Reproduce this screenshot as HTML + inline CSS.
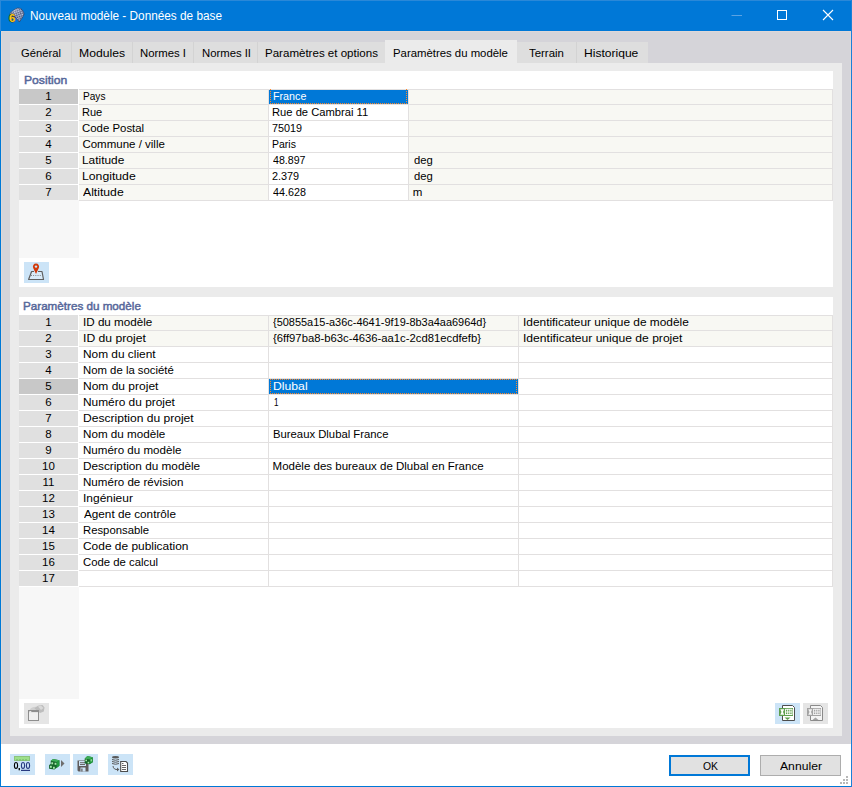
<!DOCTYPE html>
<html><head><meta charset="utf-8"><title>Nouveau modèle</title><style>
*{margin:0;padding:0;box-sizing:border-box}
html,body{width:852px;height:787px;overflow:hidden}
body{position:relative;background:#0078d7;font-family:"Liberation Sans",sans-serif;font-size:11.5px;color:#000}
.a{position:absolute}
.t{position:absolute;white-space:pre;line-height:15px;height:15px;transform-origin:0 0}
</style></head><body>
<div class="a" style="left:1px;top:31px;width:850px;height:713px;background:#d5d4d9;"></div>
<div class="a" style="left:1px;top:744px;width:850px;height:42px;background:#ffffff;"></div>
<div class="a" style="left:1px;top:31px;width:850px;height:1px;background:#ded8d8;"></div>
<div class="a" style="left:1px;top:31px;width:1px;height:713px;background:#ded8d8;"></div>
<div class="a" style="left:850px;top:31px;width:1px;height:713px;background:#ded8d8;"></div>
<div class="a" style="left:0px;top:0px;width:1px;height:31px;background:#2a88d8;"></div>
<div class="a" style="left:0px;top:0px;width:852px;height:1px;background:#2a88d8;"></div>
<div class="a" style="left:851px;top:0px;width:1px;height:787px;background:#1a80d8;"></div>
<div class="t" style="left:29.52px;top:9px;transform:scaleX(0.9820);color:#fff;font-size:12px">Nouveau modèle - Données de base</div>
<div class="a" style="left:10px;top:42px;width:638px;height:21px;background:#dedede;"></div>
<div class="t" style="left:21.03px;top:46px;transform:scaleX(0.9744);">Général</div>
<div class="a" style="left:71px;top:42px;width:1px;height:21px;background:#d3d3d3;"></div>
<div class="t" style="left:79.44px;top:46px;transform:scaleX(1.0595);">Modules</div>
<div class="a" style="left:132px;top:42px;width:1px;height:21px;background:#d3d3d3;"></div>
<div class="t" style="left:140.31px;top:46px;transform:scaleX(0.9867);">Normes I</div>
<div class="a" style="left:193px;top:42px;width:1px;height:21px;background:#d3d3d3;"></div>
<div class="t" style="left:201.52px;top:46px;transform:scaleX(0.9833);">Normes II</div>
<div class="a" style="left:257px;top:42px;width:1px;height:21px;background:#d3d3d3;"></div>
<div class="t" style="left:265.40px;top:46px;transform:scaleX(1.0036);">Paramètres et options</div>
<div class="a" style="left:385px;top:40px;width:132px;height:23px;background:#ebebeb;"></div>
<div class="t" style="left:393.41px;top:46px;transform:scaleX(0.9878);">Paramètres du modèle</div>
<div class="t" style="left:529.00px;top:46px;transform:scaleX(0.9914);">Terrain</div>
<div class="a" style="left:576px;top:42px;width:1px;height:21px;background:#d3d3d3;"></div>
<div class="t" style="left:584.35px;top:46px;transform:scaleX(1.0490);">Historique</div>
<div class="a" style="left:10px;top:63px;width:832px;height:673px;background:#ebebeb;"></div>
<div class="a" style="left:19px;top:71px;width:814px;height:216px;background:#ffffff;"></div>
<div class="t" style="left:23.69px;top:73px;transform:scaleX(1.1053);color:#56679a;font-size:11px;-webkit-text-stroke:0.45px #56679a">Position</div>
<div class="a" style="left:19px;top:89px;width:59px;height:15px;background:#c8c8c8;"></div>
<div class="a" style="left:19px;top:105px;width:59px;height:15px;background:#e0e0e0;"></div>
<div class="a" style="left:19px;top:121px;width:59px;height:15px;background:#e0e0e0;"></div>
<div class="a" style="left:19px;top:137px;width:59px;height:15px;background:#e0e0e0;"></div>
<div class="a" style="left:19px;top:153px;width:59px;height:15px;background:#e0e0e0;"></div>
<div class="a" style="left:19px;top:169px;width:59px;height:15px;background:#e0e0e0;"></div>
<div class="a" style="left:19px;top:185px;width:59px;height:15px;background:#e0e0e0;"></div>
<div class="a" style="left:79px;top:90px;width:189px;height:14px;background:#f8f8f3;"></div>
<div class="a" style="left:269px;top:90px;width:139px;height:14px;background:#ffffff;"></div>
<div class="a" style="left:409px;top:90px;width:423px;height:14px;background:#f8f8f3;"></div>
<div class="a" style="left:79px;top:105px;width:189px;height:15px;background:#f8f8f3;"></div>
<div class="a" style="left:269px;top:105px;width:139px;height:15px;background:#ffffff;"></div>
<div class="a" style="left:409px;top:105px;width:423px;height:15px;background:#f8f8f3;"></div>
<div class="a" style="left:79px;top:121px;width:189px;height:15px;background:#f8f8f3;"></div>
<div class="a" style="left:269px;top:121px;width:139px;height:15px;background:#ffffff;"></div>
<div class="a" style="left:409px;top:121px;width:423px;height:15px;background:#f8f8f3;"></div>
<div class="a" style="left:79px;top:137px;width:189px;height:15px;background:#f8f8f3;"></div>
<div class="a" style="left:269px;top:137px;width:139px;height:15px;background:#ffffff;"></div>
<div class="a" style="left:409px;top:137px;width:423px;height:15px;background:#f8f8f3;"></div>
<div class="a" style="left:79px;top:153px;width:189px;height:15px;background:#f8f8f3;"></div>
<div class="a" style="left:269px;top:153px;width:139px;height:15px;background:#ffffff;"></div>
<div class="a" style="left:409px;top:153px;width:423px;height:15px;background:#f8f8f3;"></div>
<div class="a" style="left:79px;top:169px;width:189px;height:15px;background:#f8f8f3;"></div>
<div class="a" style="left:269px;top:169px;width:139px;height:15px;background:#ffffff;"></div>
<div class="a" style="left:409px;top:169px;width:423px;height:15px;background:#f8f8f3;"></div>
<div class="a" style="left:79px;top:185px;width:189px;height:15px;background:#f8f8f3;"></div>
<div class="a" style="left:269px;top:185px;width:139px;height:15px;background:#ffffff;"></div>
<div class="a" style="left:409px;top:185px;width:423px;height:15px;background:#f8f8f3;"></div>
<div class="a" style="left:79px;top:89px;width:754px;height:1px;background:#e2e0e0;"></div>
<div class="a" style="left:79px;top:104px;width:754px;height:1px;background:#e2e0e0;"></div>
<div class="a" style="left:79px;top:120px;width:754px;height:1px;background:#e2e0e0;"></div>
<div class="a" style="left:79px;top:136px;width:754px;height:1px;background:#e2e0e0;"></div>
<div class="a" style="left:79px;top:152px;width:754px;height:1px;background:#e2e0e0;"></div>
<div class="a" style="left:79px;top:168px;width:754px;height:1px;background:#e2e0e0;"></div>
<div class="a" style="left:79px;top:184px;width:754px;height:1px;background:#e2e0e0;"></div>
<div class="a" style="left:79px;top:200px;width:754px;height:1px;background:#e2e0e0;"></div>
<div class="a" style="left:268px;top:89px;width:1px;height:112px;background:#e2e0e0;"></div>
<div class="a" style="left:408px;top:89px;width:1px;height:112px;background:#e2e0e0;"></div>
<div class="a" style="left:832px;top:89px;width:1px;height:112px;background:#e2e0e0;"></div>
<div class="a" style="left:269px;top:90px;width:139px;height:14px;background:#0078d7;"></div>
<div class="a" style="left:270px;top:103px;width:137px;height:1px;background:repeating-linear-gradient(90deg,#ff8728 0 1px,transparent 1px 2px);"></div>
<div class="a" style="left:270px;top:89px;width:1px;height:15px;background:repeating-linear-gradient(180deg,#ff8728 0 1px,transparent 1px 2px);"></div>
<div class="a" style="left:406px;top:89px;width:1px;height:15px;background:repeating-linear-gradient(180deg,#ff8728 0 1px,transparent 1px 2px);"></div>
<div class="t" style="left:19px;top:89px;width:59px;text-align:center">1</div>
<div class="t" style="left:19px;top:105px;width:59px;text-align:center">2</div>
<div class="t" style="left:19px;top:121px;width:59px;text-align:center">3</div>
<div class="t" style="left:19px;top:137px;width:59px;text-align:center">4</div>
<div class="t" style="left:19px;top:153px;width:59px;text-align:center">5</div>
<div class="t" style="left:19px;top:169px;width:59px;text-align:center">6</div>
<div class="t" style="left:19px;top:185px;width:59px;text-align:center">7</div>
<div class="t" style="left:82.52px;top:89px;transform:scaleX(0.8792);">Pays</div>
<div class="t" style="left:82.44px;top:105px;transform:scaleX(0.9600);">Rue</div>
<div class="t" style="left:82.41px;top:121px;transform:scaleX(0.9918);">Code Postal</div>
<div class="t" style="left:82.40px;top:137px;">Commune / ville</div>
<div class="t" style="left:82.37px;top:153px;transform:scaleX(1.0325);">Latitude</div>
<div class="t" style="left:82.34px;top:169px;transform:scaleX(1.0633);">Longitude</div>
<div class="t" style="left:83.40px;top:185px;transform:scaleX(1.0605);">Altitude</div>
<div class="t" style="left:272.97px;top:89px;transform:scaleX(0.9314);color:#fff">France</div>
<div class="t" style="left:272.33px;top:105px;transform:scaleX(0.9732);">Rue de Cambrai 11</div>
<div class="t" style="left:272.36px;top:121px;transform:scaleX(0.9387);">75019</div>
<div class="t" style="left:272.39px;top:137px;transform:scaleX(0.9120);">Paris</div>
<div class="t" style="left:273.30px;top:153px;transform:scaleX(0.9229);">48.897</div>
<div class="t" style="left:272.36px;top:169px;transform:scaleX(0.9429);">2.379</div>
<div class="t" style="left:273.30px;top:185px;transform:scaleX(0.9343);">44.628</div>
<div class="t" style="left:413.80px;top:153px;transform:scaleX(0.9789);">deg</div>
<div class="t" style="left:413.80px;top:169px;transform:scaleX(0.9789);">deg</div>
<div class="t" style="left:412.80px;top:185px;">m</div>
<div class="a" style="left:19px;top:200px;width:60px;height:58px;background:#f7f7f7;"></div>
<div class="a" style="left:24px;top:262px;width:25px;height:21px;background:#cce4f7;"></div>
<div class="a" style="left:19px;top:297px;width:814px;height:431px;background:#ffffff;"></div>
<div class="t" style="left:23.44px;top:299px;transform:scaleX(1.0591);color:#56679a;font-size:11px;-webkit-text-stroke:0.45px #56679a">Paramètres du modèle</div>
<div class="a" style="left:19px;top:315px;width:59px;height:15px;background:#e0e0e0;"></div>
<div class="a" style="left:19px;top:331px;width:59px;height:15px;background:#e0e0e0;"></div>
<div class="a" style="left:19px;top:347px;width:59px;height:15px;background:#e0e0e0;"></div>
<div class="a" style="left:19px;top:363px;width:59px;height:15px;background:#e0e0e0;"></div>
<div class="a" style="left:19px;top:379px;width:59px;height:15px;background:#c8c8c8;"></div>
<div class="a" style="left:19px;top:395px;width:59px;height:15px;background:#e0e0e0;"></div>
<div class="a" style="left:19px;top:411px;width:59px;height:15px;background:#e0e0e0;"></div>
<div class="a" style="left:19px;top:427px;width:59px;height:15px;background:#e0e0e0;"></div>
<div class="a" style="left:19px;top:443px;width:59px;height:15px;background:#e0e0e0;"></div>
<div class="a" style="left:19px;top:459px;width:59px;height:15px;background:#e0e0e0;"></div>
<div class="a" style="left:19px;top:475px;width:59px;height:15px;background:#e0e0e0;"></div>
<div class="a" style="left:19px;top:491px;width:59px;height:15px;background:#e0e0e0;"></div>
<div class="a" style="left:19px;top:507px;width:59px;height:15px;background:#e0e0e0;"></div>
<div class="a" style="left:19px;top:523px;width:59px;height:15px;background:#e0e0e0;"></div>
<div class="a" style="left:19px;top:539px;width:59px;height:15px;background:#e0e0e0;"></div>
<div class="a" style="left:19px;top:555px;width:59px;height:15px;background:#e0e0e0;"></div>
<div class="a" style="left:19px;top:571px;width:59px;height:15px;background:#e0e0e0;"></div>
<div class="a" style="left:79px;top:316px;width:189px;height:14px;background:#f8f8f3;"></div>
<div class="a" style="left:269px;top:316px;width:249px;height:14px;background:#f8f8f3;"></div>
<div class="a" style="left:519px;top:316px;width:313px;height:14px;background:#f8f8f3;"></div>
<div class="a" style="left:79px;top:331px;width:189px;height:15px;background:#f8f8f3;"></div>
<div class="a" style="left:269px;top:331px;width:249px;height:15px;background:#f8f8f3;"></div>
<div class="a" style="left:519px;top:331px;width:313px;height:15px;background:#f8f8f3;"></div>
<div class="a" style="left:79px;top:347px;width:189px;height:15px;background:#ffffff;"></div>
<div class="a" style="left:269px;top:347px;width:249px;height:15px;background:#ffffff;"></div>
<div class="a" style="left:519px;top:347px;width:313px;height:15px;background:#ffffff;"></div>
<div class="a" style="left:79px;top:363px;width:189px;height:15px;background:#ffffff;"></div>
<div class="a" style="left:269px;top:363px;width:249px;height:15px;background:#ffffff;"></div>
<div class="a" style="left:519px;top:363px;width:313px;height:15px;background:#ffffff;"></div>
<div class="a" style="left:79px;top:379px;width:189px;height:15px;background:#ffffff;"></div>
<div class="a" style="left:269px;top:379px;width:249px;height:15px;background:#ffffff;"></div>
<div class="a" style="left:519px;top:379px;width:313px;height:15px;background:#ffffff;"></div>
<div class="a" style="left:79px;top:395px;width:189px;height:15px;background:#ffffff;"></div>
<div class="a" style="left:269px;top:395px;width:249px;height:15px;background:#ffffff;"></div>
<div class="a" style="left:519px;top:395px;width:313px;height:15px;background:#ffffff;"></div>
<div class="a" style="left:79px;top:411px;width:189px;height:15px;background:#ffffff;"></div>
<div class="a" style="left:269px;top:411px;width:249px;height:15px;background:#ffffff;"></div>
<div class="a" style="left:519px;top:411px;width:313px;height:15px;background:#ffffff;"></div>
<div class="a" style="left:79px;top:427px;width:189px;height:15px;background:#ffffff;"></div>
<div class="a" style="left:269px;top:427px;width:249px;height:15px;background:#ffffff;"></div>
<div class="a" style="left:519px;top:427px;width:313px;height:15px;background:#ffffff;"></div>
<div class="a" style="left:79px;top:443px;width:189px;height:15px;background:#ffffff;"></div>
<div class="a" style="left:269px;top:443px;width:249px;height:15px;background:#ffffff;"></div>
<div class="a" style="left:519px;top:443px;width:313px;height:15px;background:#ffffff;"></div>
<div class="a" style="left:79px;top:459px;width:189px;height:15px;background:#ffffff;"></div>
<div class="a" style="left:269px;top:459px;width:249px;height:15px;background:#ffffff;"></div>
<div class="a" style="left:519px;top:459px;width:313px;height:15px;background:#ffffff;"></div>
<div class="a" style="left:79px;top:475px;width:189px;height:15px;background:#ffffff;"></div>
<div class="a" style="left:269px;top:475px;width:249px;height:15px;background:#ffffff;"></div>
<div class="a" style="left:519px;top:475px;width:313px;height:15px;background:#ffffff;"></div>
<div class="a" style="left:79px;top:491px;width:189px;height:15px;background:#ffffff;"></div>
<div class="a" style="left:269px;top:491px;width:249px;height:15px;background:#ffffff;"></div>
<div class="a" style="left:519px;top:491px;width:313px;height:15px;background:#ffffff;"></div>
<div class="a" style="left:79px;top:507px;width:189px;height:15px;background:#ffffff;"></div>
<div class="a" style="left:269px;top:507px;width:249px;height:15px;background:#ffffff;"></div>
<div class="a" style="left:519px;top:507px;width:313px;height:15px;background:#ffffff;"></div>
<div class="a" style="left:79px;top:523px;width:189px;height:15px;background:#ffffff;"></div>
<div class="a" style="left:269px;top:523px;width:249px;height:15px;background:#ffffff;"></div>
<div class="a" style="left:519px;top:523px;width:313px;height:15px;background:#ffffff;"></div>
<div class="a" style="left:79px;top:539px;width:189px;height:15px;background:#ffffff;"></div>
<div class="a" style="left:269px;top:539px;width:249px;height:15px;background:#ffffff;"></div>
<div class="a" style="left:519px;top:539px;width:313px;height:15px;background:#ffffff;"></div>
<div class="a" style="left:79px;top:555px;width:189px;height:15px;background:#ffffff;"></div>
<div class="a" style="left:269px;top:555px;width:249px;height:15px;background:#ffffff;"></div>
<div class="a" style="left:519px;top:555px;width:313px;height:15px;background:#ffffff;"></div>
<div class="a" style="left:79px;top:571px;width:189px;height:15px;background:#ffffff;"></div>
<div class="a" style="left:269px;top:571px;width:249px;height:15px;background:#ffffff;"></div>
<div class="a" style="left:519px;top:571px;width:313px;height:15px;background:#ffffff;"></div>
<div class="a" style="left:79px;top:315px;width:754px;height:1px;background:#e2e0e0;"></div>
<div class="a" style="left:79px;top:330px;width:754px;height:1px;background:#e2e0e0;"></div>
<div class="a" style="left:79px;top:346px;width:754px;height:1px;background:#e2e0e0;"></div>
<div class="a" style="left:79px;top:362px;width:754px;height:1px;background:#e2e0e0;"></div>
<div class="a" style="left:79px;top:378px;width:754px;height:1px;background:#e2e0e0;"></div>
<div class="a" style="left:79px;top:394px;width:754px;height:1px;background:#e2e0e0;"></div>
<div class="a" style="left:79px;top:410px;width:754px;height:1px;background:#e2e0e0;"></div>
<div class="a" style="left:79px;top:426px;width:754px;height:1px;background:#e2e0e0;"></div>
<div class="a" style="left:79px;top:442px;width:754px;height:1px;background:#e2e0e0;"></div>
<div class="a" style="left:79px;top:458px;width:754px;height:1px;background:#e2e0e0;"></div>
<div class="a" style="left:79px;top:474px;width:754px;height:1px;background:#e2e0e0;"></div>
<div class="a" style="left:79px;top:490px;width:754px;height:1px;background:#e2e0e0;"></div>
<div class="a" style="left:79px;top:506px;width:754px;height:1px;background:#e2e0e0;"></div>
<div class="a" style="left:79px;top:522px;width:754px;height:1px;background:#e2e0e0;"></div>
<div class="a" style="left:79px;top:538px;width:754px;height:1px;background:#e2e0e0;"></div>
<div class="a" style="left:79px;top:554px;width:754px;height:1px;background:#e2e0e0;"></div>
<div class="a" style="left:79px;top:570px;width:754px;height:1px;background:#e2e0e0;"></div>
<div class="a" style="left:79px;top:586px;width:754px;height:1px;background:#e2e0e0;"></div>
<div class="a" style="left:268px;top:315px;width:1px;height:272px;background:#e2e0e0;"></div>
<div class="a" style="left:518px;top:315px;width:1px;height:272px;background:#e2e0e0;"></div>
<div class="a" style="left:832px;top:315px;width:1px;height:272px;background:#e2e0e0;"></div>
<div class="a" style="left:269px;top:379px;width:249px;height:15px;background:#0078d7;"></div>
<div class="a" style="left:270px;top:379px;width:247px;height:1px;background:repeating-linear-gradient(90deg,#ff8728 0 1px,transparent 1px 2px);"></div>
<div class="a" style="left:270px;top:393px;width:247px;height:1px;background:repeating-linear-gradient(90deg,#ff8728 0 1px,transparent 1px 2px);"></div>
<div class="a" style="left:270px;top:379px;width:1px;height:15px;background:repeating-linear-gradient(180deg,#ff8728 0 1px,transparent 1px 2px);"></div>
<div class="a" style="left:516px;top:379px;width:1px;height:15px;background:repeating-linear-gradient(180deg,#ff8728 0 1px,transparent 1px 2px);"></div>
<div class="t" style="left:19px;top:315px;width:59px;text-align:center">1</div>
<div class="t" style="left:19px;top:331px;width:59px;text-align:center">2</div>
<div class="t" style="left:19px;top:347px;width:59px;text-align:center">3</div>
<div class="t" style="left:19px;top:363px;width:59px;text-align:center">4</div>
<div class="t" style="left:19px;top:379px;width:59px;text-align:center">5</div>
<div class="t" style="left:19px;top:395px;width:59px;text-align:center">6</div>
<div class="t" style="left:19px;top:411px;width:59px;text-align:center">7</div>
<div class="t" style="left:19px;top:427px;width:59px;text-align:center">8</div>
<div class="t" style="left:19px;top:443px;width:59px;text-align:center">9</div>
<div class="t" style="left:19px;top:459px;width:59px;text-align:center">10</div>
<div class="t" style="left:19px;top:475px;width:59px;text-align:center">11</div>
<div class="t" style="left:19px;top:491px;width:59px;text-align:center">12</div>
<div class="t" style="left:19px;top:507px;width:59px;text-align:center">13</div>
<div class="t" style="left:19px;top:523px;width:59px;text-align:center">14</div>
<div class="t" style="left:19px;top:539px;width:59px;text-align:center">15</div>
<div class="t" style="left:19px;top:555px;width:59px;text-align:center">16</div>
<div class="t" style="left:19px;top:571px;width:59px;text-align:center">17</div>
<div class="t" style="left:82.59px;top:315px;transform:scaleX(1.0134);">ID du modèle</div>
<div class="t" style="left:82.54px;top:331px;transform:scaleX(1.0569);">ID du projet</div>
<div class="t" style="left:82.57px;top:347px;transform:scaleX(1.0319);">Nom du client</div>
<div class="t" style="left:82.61px;top:363px;transform:scaleX(0.9868);">Nom de la société</div>
<div class="t" style="left:82.56px;top:379px;transform:scaleX(1.0437);">Nom du projet</div>
<div class="t" style="left:82.57px;top:395px;transform:scaleX(1.0341);">Numéro du projet</div>
<div class="t" style="left:82.55px;top:411px;transform:scaleX(1.0490);">Description du projet</div>
<div class="t" style="left:82.59px;top:427px;transform:scaleX(1.0137);">Nom du modèle</div>
<div class="t" style="left:82.59px;top:443px;transform:scaleX(1.0062);">Numéro du modèle</div>
<div class="t" style="left:82.58px;top:459px;transform:scaleX(1.0239);">Description du modèle</div>
<div class="t" style="left:82.59px;top:475px;transform:scaleX(1.0071);">Numéro de révision</div>
<div class="t" style="left:82.56px;top:491px;transform:scaleX(1.0404);">Ingénieur</div>
<div class="t" style="left:83.60px;top:507px;transform:scaleX(1.0200);">Agent de contrôle</div>
<div class="t" style="left:82.62px;top:523px;transform:scaleX(0.9833);">Responsable</div>
<div class="t" style="left:82.56px;top:539px;transform:scaleX(1.0370);">Code de publication</div>
<div class="t" style="left:82.61px;top:555px;transform:scaleX(0.9867);">Code de calcul</div>
<div class="t" style="left:272.70px;top:315px;transform:scaleX(0.9522);">{50855a15-a36c-4641-9f19-8b3a4aa6964d}</div>
<div class="t" style="left:272.70px;top:331px;transform:scaleX(0.9807);">{6ff97ba8-b63c-4636-aa1c-2cd81ecdfefb}</div>
<div class="t" style="left:272.74px;top:379px;transform:scaleX(1.0613);color:#fff">Dlubal</div>
<div class="t" style="left:273.90px;top:395px;transform:scaleX(0.7000);">1</div>
<div class="t" style="left:272.62px;top:427px;transform:scaleX(0.9819);">Bureaux Dlubal France</div>
<div class="t" style="left:272.60px;top:459px;">Modèle des bureaux de Dlubal en France</div>
<div class="t" style="left:523.17px;top:315px;transform:scaleX(1.0333);">Identificateur unique de modèle</div>
<div class="t" style="left:523.15px;top:331px;transform:scaleX(1.0520);">Identificateur unique de projet</div>
<div class="a" style="left:19px;top:587px;width:60px;height:112px;background:#f7f7f7;"></div>
<div class="a" style="left:24px;top:703px;width:25px;height:21px;background:#e5e5e5;"></div>
<div class="a" style="left:775px;top:703px;width:25px;height:21px;background:#cce4f7;"></div>
<div class="a" style="left:803px;top:703px;width:25px;height:21px;background:#e5e5e5;"></div>
<div class="a" style="left:10px;top:754px;width:25px;height:21px;background:#cce4f7;"></div>
<div class="a" style="left:45px;top:754px;width:25px;height:21px;background:#cce4f7;"></div>
<div class="a" style="left:73px;top:754px;width:25px;height:21px;background:#cce4f7;"></div>
<div class="a" style="left:108px;top:754px;width:25px;height:21px;background:#cce4f7;"></div>
<div class="a" style="left:669px;top:755px;width:81px;height:21px;background:#e1e1e1;border:2px solid #0078d7;"></div>
<div class="t" style="left:702.50px;top:759px;transform:scaleX(0.9062);">OK</div>
<div class="a" style="left:760px;top:755px;width:81px;height:21px;background:#e1e1e1;border:1px solid #adadad;"></div>
<div class="t" style="left:780.00px;top:759px;transform:scaleX(1.0590);">Annuler</div>
<svg class="a" style="left:0;top:0;pointer-events:none" width="852" height="787" viewBox="0 0 852 787">
<defs>
<pattern id="ck" width="3" height="3" patternUnits="userSpaceOnUse" patternTransform="rotate(25)">
<rect width="3" height="3" fill="#c6d2ee"/><rect width="1.5" height="1.5" fill="#34406a"/><rect x="1.5" y="1.5" width="1.5" height="1.5" fill="#34406a"/>
</pattern>
</defs>
<!-- title icon -->
<linearGradient id="shd" x1="0" y1="0" x2="1" y2="1"><stop offset="0" stop-color="#fff" stop-opacity="0.45"/><stop offset="0.55" stop-color="#fff" stop-opacity="0"/><stop offset="1" stop-color="#000" stop-opacity="0.35"/></linearGradient>
<path d="M9.8,13.4 C12,11.2 15,8.8 17.8,8 L20.8,8.6 C22.6,10 23.8,12 24,14.2 C22.8,17.2 21,19.6 19.4,22 C17.2,18.8 13.8,15.2 9.8,13.4 Z" fill="url(#ck)" stroke="#2a3358" stroke-width="0.6"/>
<path d="M9.8,13.4 C12,11.2 15,8.8 17.8,8 L20.8,8.6 C22.6,10 23.8,12 24,14.2 C22.8,17.2 21,19.6 19.4,22 C17.2,18.8 13.8,15.2 9.8,13.4 Z" fill="url(#shd)"/>
<text x="9" y="22.4" font-family="Liberation Sans" font-weight="bold" font-size="11.5" fill="#f6c81c" stroke="#4a3c10" stroke-width="1" paint-order="stroke">6</text>
<!-- window controls -->
<line x1="731.5" y1="15.5" x2="742" y2="15.5" stroke="#5ba3e3" stroke-width="1"/>
<rect x="777.5" y="10.5" width="9" height="9" fill="none" stroke="#fff" stroke-width="1"/>
<path d="M823,10 L833,20 M833,10 L823,20" stroke="#fff" stroke-width="1.1"/>
<!-- map pin -->
<path d="M31.6,271.5 H42 L43.5,279.5 H28.6 Z" fill="#ffffff" fill-opacity="0.25"/>
<path d="M34,271.5 H31.6 L28.6,279.5 H43.5 L42,271.5 H38" fill="none" stroke="#5f5f5f" stroke-width="1.2" stroke-linejoin="round"/>
<line x1="31" y1="275.5" x2="41" y2="275.5" stroke="#6f6f6f" stroke-width="0.9" stroke-dasharray="0.9,1.3"/>
<path d="M36,274 L33.2,268 A3.1,3.1 0 1 1 38.8,268 Z" fill="#d2390a"/>
<circle cx="36" cy="266.6" r="1.2" fill="#cce4f7"/>
<!-- grey window icon (box 2) -->
<path d="M29.5,709.8 C31,707.5 34,706.5 36.5,706.8 L38.5,708.6 L35.5,710.8 Z" fill="#cfcfcf"/>
<path d="M34.5,708.5 C36.5,706 39,705 42.5,705 L44.5,707.5 L43.8,711.5 L40,713 L37.5,711 Z" fill="#bdbdbd"/>
<path d="M38,706.5 L41,705.5 L43.5,708 L41,710 Z" fill="#d9d9d9"/>
<rect x="28.5" y="710.5" width="10" height="10" fill="#f0f0f0" stroke="#8e8e8e" stroke-width="1"/>
<rect x="28.5" y="710.5" width="10" height="1.6" fill="#8e8e8e"/>
<rect x="29.3" y="711.2" width="2" height="1" fill="#fff"/>
<!-- excel A -->
<path d="M782.5,705.5 H792.5 L794.5,707.5 V720.5 H782.5 Z" fill="#fff" stroke="#4d4d4d" stroke-width="1"/>
<rect x="779" y="708" width="14" height="8" fill="#5e9f4f"/>
<path d="M780.3,709.2 H784.2 L783,712 L784.2,714.8 H780.3 L781.5,712 Z" fill="#fff"/>
<path d="M785.5,709 V715 M787.7,709 V715 M789.8,709 V715 M792,709 V715 M785.5,709.3 H792 M785.5,712 H792 M785.5,714.5 H792" stroke="#fff" stroke-width="0.9"/>
<path d="M784.5,717.5 H790.5 L787.5,720 Z" fill="#5e9f4f"/>
<!-- excel B -->
<path d="M810.5,705.5 H820.5 L822.5,707.5 V720.5 H810.5 Z" fill="#f4f4f4" stroke="#8a8a8a" stroke-width="1"/>
<rect x="807" y="708" width="14" height="8" fill="#a3a3a3"/>
<path d="M808.3,709.2 H812.2 L811,712 L812.2,714.8 H808.3 L809.5,712 Z" fill="#f4f4f4"/>
<path d="M813.5,709 V715 M815.7,709 V715 M817.8,709 V715 M820,709 V715 M813.5,709.3 H820 M813.5,712 H820 M813.5,714.5 H820" stroke="#f4f4f4" stroke-width="0.9"/>
<path d="M812.5,720 H818.5 L815.5,717.5 Z" fill="#a3a3a3"/>
<!-- bottom icon 1: 0.00 -->
<rect x="14.5" y="756.5" width="15" height="4" fill="#9de08a" stroke="#8cc47c" stroke-width="1"/>
<path d="M17,759 V760.5 M20,759 V760.5 M23,759 V760.5 M26,759 V760.5" stroke="#6fae62" stroke-width="1"/>
<ellipse cx="16" cy="765.5" rx="1.6" ry="3" fill="none" stroke="#000" stroke-width="1.1"/>
<rect x="18.6" y="768" width="1.3" height="2.3" fill="#000"/>
<ellipse cx="23" cy="765.5" rx="1.6" ry="3" fill="none" stroke="#283a80" stroke-width="1.1"/>
<ellipse cx="28" cy="765.5" rx="1.6" ry="3" fill="none" stroke="#283a80" stroke-width="1.1"/>
<rect x="21" y="769.8" width="9" height="1.2" fill="#283a80"/>
<!-- bottom icon 2: green cube ? -->
<path d="M50.7,760.7 L53.2,759.1 L59.4,760.2 L59.4,765.7 L54.4,769.6 L49.1,768.7 L49.1,765.1 L50.7,764 Z" fill="#17652a"/>
<path d="M50.7,760.7 L53.2,759.1 L59.4,760.2 L56.8,762 Z" fill="#3dae57"/>
<path d="M56.8,762 L59.4,760.2 L59.4,765.7 L56.5,768 Z" fill="#1f9a3c"/>
<rect x="51.3" y="762.3" width="1.8" height="2" fill="#a6e7a8"/><rect x="54.6" y="762.8" width="1.8" height="2" fill="#a6e7a8"/>
<rect x="50" y="765.8" width="1.8" height="2" fill="#a6e7a8"/><rect x="53" y="766.8" width="1.8" height="2" fill="#a6e7a8"/>
<path d="M61,760 L64.5,763.5 L61,767 Z" fill="#6e6e6e"/>
<!-- bottom icon 3: floppy + cube -->
<path d="M77.5,760.5 H87.5 L88.5,761.5 V771.5 H78.5 L77.5,770.5 Z" fill="#5f5a5a"/>
<rect x="79" y="761" width="7" height="5" fill="#cde3f5"/>
<path d="M80,762.7 H85 M80,764.5 H85" stroke="#5f5a5a" stroke-width="0.9"/>
<rect x="80.5" y="767.5" width="5" height="4" fill="#cde3f5"/>
<rect x="81.3" y="768.5" width="1.2" height="3" fill="#5f5a5a"/>
<path d="M84.7,758.8 L87.3,756 L92.7,757.3 L92.7,762.3 L89.5,764.2 L84.7,763.5 Z" fill="#17652a"/>
<path d="M84.7,758.8 L87.3,756 L92.7,757.3 L90,759.5 Z" fill="#3dae57"/>
<path d="M90,759.5 L92.7,757.3 L92.7,762.3 L89.5,764.2 Z" fill="#1f9a3c"/>
<rect x="85.4" y="759.6" width="1.6" height="1.6" fill="#a6e7a8"/><rect x="87.6" y="761.8" width="1.6" height="1.6" fill="#a6e7a8"/><rect x="90.6" y="759.2" width="1.3" height="2.2" fill="#9ee0a0"/>
<!-- bottom icon 4: db -> doc -->
<ellipse cx="115.5" cy="757.2" rx="3.5" ry="1.2" fill="#5a5a5a"/>
<path d="M112,759.5 Q115.5,761 119,759.5 M112,761.5 Q115.5,763 119,761.5 M112,763.5 Q115.5,765 119,763.5" fill="none" stroke="#5a5a5a" stroke-width="1"/>
<path d="M113,766 Q113.5,770 118,769.5" fill="none" stroke="#5a5a5a" stroke-width="1"/>
<path d="M117,767.5 L119.3,769.5 L117,771.5 Z" fill="#5a5a5a"/>
<path d="M120.7,761.5 H126 L127.5,763 V771.5 H120.7 Z" fill="#fff" stroke="#4d4d4d" stroke-width="1.1"/>
<path d="M122,763.5 H123.5 M122,765.5 H126 M122,767.5 H126 M122,769.5 H126" stroke="#555" stroke-width="0.9"/>
<!-- resize grip -->
<path d="M846,776h2v2h-2z M843,779h2v2h-2z M846,779h2v2h-2z M840,782h2v2h-2z M843,782h2v2h-2z M846,782h2v2h-2z" fill="#b8b8b8"/>
</svg>

</body></html>
